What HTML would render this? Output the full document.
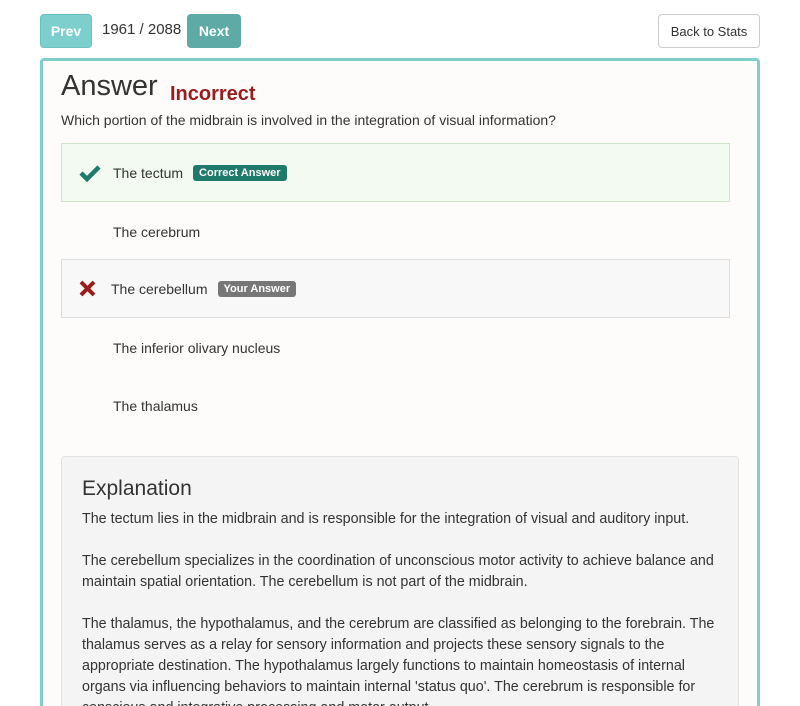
<!DOCTYPE html>
<html><head><style>
*{box-sizing:border-box;margin:0;padding:0}
html,body{width:800px;height:706px;overflow:hidden}
body{background:#fff;font-family:"Liberation Sans",sans-serif;color:#333;position:relative}
.btn{position:absolute;top:14px;height:34px;border-radius:4px;color:#fff;font-weight:bold;font-size:14px;display:flex;align-items:center;justify-content:center}
.card{position:absolute;left:40px;top:58px;width:720px;height:660px;border:3px solid #7ccfcc;border-radius:4px;background:#fdfcfb}
.opt{position:absolute;left:61px;width:669px;height:59px;display:flex;align-items:center;font-size:14px}
.badge{display:inline-block;color:#fff;font-size:11px;font-weight:bold;padding:2px 6px;border-radius:3px;margin-left:10px}
.exp{position:absolute;left:61px;top:456px;width:678px;height:280px;background:#f4f4f4;border:1px solid #e2e2e2;border-radius:4px;padding:20px 20px}
.exp p{font-size:14.3px;line-height:21px;margin-bottom:21px;color:#333}
</style></head><body>
<div class="btn" style="left:40px;width:52px;background:#7ccfcc;border:1px solid #6bc0bd">Prev</div>
<div style="position:absolute;left:102px;top:21px;font-size:15px">1961 / 2088</div>
<div class="btn" style="left:187px;width:54px;background:#5eaaa7">Next</div>
<div class="btn" style="left:658px;width:102px;height:34px;background:#fff;border:1px solid #ccc;color:#333;font-weight:normal;font-size:13px">Back to Stats</div>
<div class="card"></div>
<div style="position:absolute;left:61px;top:70px;font-size:29px;color:#333">Answer</div>
<div style="position:absolute;left:170px;top:83px;font-size:20px;font-weight:bold;color:#9b1c1c">Incorrect</div>
<div style="position:absolute;left:61px;top:112px;font-size:14px">Which portion of the midbrain is involved in the integration of visual information?</div>
<div class="opt" style="top:143px;background:#f3faf1;border:1px solid #cfe3cb">
<svg style="position:absolute;left:17px;top:20px" width="22" height="18" viewBox="0 0 22 18"><path d="M2 9l6 6L20 3" stroke="#1e7a6a" stroke-width="4.5" fill="none"/></svg>
<span style="margin-left:51px">The tectum</span><span class="badge" style="background:#1e7a6a">Correct Answer</span></div>
<div class="opt" style="top:202px"><span style="margin-left:52px">The cerebrum</span></div>
<div class="opt" style="top:259px;background:#f8f8f8;border:1px solid #ddd">
<svg style="position:absolute;left:17px;top:20px" width="17" height="17" viewBox="0 0 17 17"><path d="M2 2l13 13M15 2L2 15" stroke="#9b1c1c" stroke-width="4" fill="none"/></svg>
<span style="margin-left:49px">The cerebellum</span><span class="badge" style="background:#777">Your Answer</span></div>
<div class="opt" style="top:318px"><span style="margin-left:52px">The inferior olivary nucleus</span></div>
<div class="opt" style="top:376px"><span style="margin-left:52px">The thalamus</span></div>
<div class="exp">
<div style="font-size:21px;margin-bottom:8px">Explanation</div>
<p>The tectum lies in the midbrain and is responsible for the integration of visual and auditory input.</p>
<p>The cerebellum specializes in the coordination of unconscious motor activity to achieve balance and maintain spatial orientation. The cerebellum is not part of the midbrain.</p>
<p>The thalamus, the hypothalamus, and the cerebrum are classified as belonging to the forebrain. The thalamus serves as a relay for sensory information and projects these sensory signals to the appropriate destination. The hypothalamus largely functions to maintain homeostasis of internal organs via influencing behaviors to maintain internal 'status quo'. The cerebrum is responsible for conscious and integrative processing and motor output.</p>
</div>
</body></html>
